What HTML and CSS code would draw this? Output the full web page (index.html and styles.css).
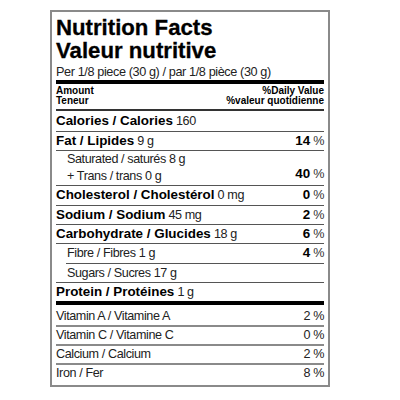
FILE: index.html
```html
<!DOCTYPE html>
<html lang="en">
<head>
    <meta charset="UTF-8">
    <title>Nutrition Facts</title>
    <link rel="stylesheet" href="styles.css">
</head>
<body>
    <div class="label">
        <h1 class="title">Nutrition Facts<br>Valeur nutritive</h1>
        <p class="serving">Per 1/8 piece (30 g) / par 1/8 pièce (30 g)</p>

        <div class="head-row">
            <div>Amount<br>Teneur</div>
            <div class="right">%Daily Value<br>%valeur quotidienne</div>
        </div>

        <div class="row first"><span><b>Calories / Calories</b> 160</span></div>
        <div class="row"><span><b>Fat / Lipides</b> 9 g</span><span class="dv"><b>14</b> %</span></div>
        <div class="row pair">
            <div class="lines">
                <span>Saturated / saturés 8 g</span>
                <span>+ Trans / trans 0 g</span>
            </div>
            <span class="dv"><b>40</b> %</span>
        </div>
        <div class="row"><span><b>Cholesterol / Cholestérol</b> 0 mg</span><span class="dv"><b>0</b> %</span></div>
        <div class="row"><span><b>Sodium / Sodium</b> 45 mg</span><span class="dv"><b>2</b> %</span></div>
        <div class="row"><span><b>Carbohydrate / Glucides</b> 18 g</span><span class="dv"><b>6</b> %</span></div>
        <div class="row sub inset"><span>Fibre / Fibres 1 g</span><span class="dv"><b>4</b> %</span></div>
        <div class="row sub"><span>Sugars / Sucres 17 g</span></div>
        <div class="row thick"><span><b>Protein / Protéines</b> 1 g</span></div>

        <!-- vitamins -->
        <div class="vit first"><span>Vitamin A / Vitamine A</span><span>2 %</span></div>
        <div class="vit"><span>Vitamin C / Vitamine C</span><span>0 %</span></div>
        <div class="vit"><span>Calcium / Calcium</span><span>2 %</span></div>
        <div class="vit last"><span>Iron / Fer</span><span>8 %</span></div>
    </div>
</body>
</html>
```

FILE: styles.css
```css
body { margin: 0; background: #fff; font-family: "Liberation Sans", Arial, sans-serif; color: #222; }

.label {
    width: 268px;
    margin: 10px 0 0 50px;
    padding: 4px 4px 3px 4px;
    border: 2px solid #8a8a8a;
}

.title {
    margin: 0;
    font-size: 22.2px;
    line-height: 23px;
    font-weight: 900;
    color: #000;
    -webkit-text-stroke: 0.3px #000;
}

.serving {
    margin: 0;
    padding-top: 2px;
    font-size: 12.7px;
    line-height: 16px;
    letter-spacing: -0.4px;
    border-bottom: 4px solid #000;
}

.head-row {
    display: flex;
    justify-content: space-between;
    margin-top: 2px;
    padding-bottom: 3px;
    border-bottom: 2px solid #333;
    font-size: 10px;
    line-height: 10px;
    font-weight: bold;
    color: #000;
}
.head-row .right { text-align: right; }

.row {
    display: flex;
    justify-content: space-between;
    font-size: 12.6px;
    letter-spacing: -0.4px;
    line-height: 18.35px;
    border-bottom: 1px solid #555;
}
.row b { font-size: 13.4px; letter-spacing: 0; color: #000; }
.row.first { line-height: 20px; }
.row.pair { padding-left: 11px; }
.row.pair .lines { display: flex; flex-direction: column; line-height: 17px; }
.row.pair .dv { align-self: flex-end; line-height: 22px; }
.row.sub { padding-left: 11px; }
.row.inset { margin-left: 10px; padding-left: 1px; }
.row.thick { border-bottom: 4px solid #000; }
.dv { color: #333; }

.vit {
    display: flex;
    justify-content: space-between;
    font-size: 12.6px;
    letter-spacing: -0.4px;
    line-height: 17px;
    border-bottom: 2px solid #8a8a8a;
}
.vit.first { margin-top: 3px; }
.vit.last { border-bottom: none; }
```
